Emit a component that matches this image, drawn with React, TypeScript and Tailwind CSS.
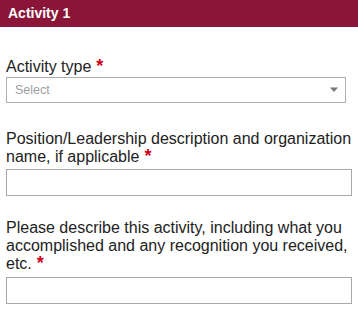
import React from 'react';

function Req() {
  return <span className="inline-block align-top text-[#d0021b] font-bold text-[18px] leading-[17px] ml-[5px]">*</span>;
}

export default function App() {
  return (
    <div className="w-[358px] h-[317px] bg-white overflow-hidden font-['Liberation_Sans',Arial,sans-serif] text-[#222]">
      {/* Section header */}
      <div className="h-[27px] bg-[#8a1538] flex items-center pl-[8px]">
        <span className="text-white font-bold text-[14px]">Activity 1</span>
      </div>

      <div className="px-[6px]">
        {/* Activity type */}
        <label className="block mt-[31px] text-[16px] leading-[18px]">
          Activity type<Req />
        </label>
        <div className="mt-[1px] w-[340px] h-[26px] border border-[#b0b0b0] flex items-center justify-between pl-[8px] pr-[6px]">
          <span className="text-[12.5px] text-[#a0a0a0]">Select</span>
          <svg width="10" height="6" viewBox="0 0 10 6">
            <path d="M1 0.5 L9 0.5 L5 5 Z" fill="#777" />
          </svg>
        </div>

        {/* Position */}
        <label className="block mt-[27px] text-[16px] leading-[18px]">
          Position/Leadership description and organization name, if applicable<Req />
        </label>
        <div className="mt-[3px] w-[346px] h-[27px] border border-[#a8a8a8]" />

        {/* Description */}
        <label className="block mt-[23px] text-[16px] leading-[18px]">
          Please describe this activity, including what you accomplished and any recognition you received, etc.<Req />
        </label>
        <div className="mt-[4px] w-[346px] h-[27px] border border-[#a8a8a8]" />
      </div>
    </div>
  );
}
